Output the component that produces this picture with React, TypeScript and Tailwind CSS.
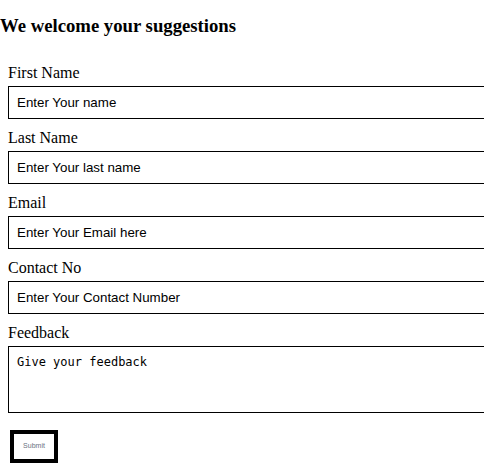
export default function App() {
  const fields = [
    { label: "First Name", placeholder: "Enter Your name" },
    { label: "Last Name", placeholder: "Enter Your last name" },
    { label: "Email", placeholder: "Enter Your Email here" },
    { label: "Contact No", placeholder: "Enter Your Contact Number" },
  ];

  return (
    <div className="bg-white text-black overflow-hidden w-[484px] h-[470px]" style={{ fontFamily: '"Liberation Serif", serif' }}>
      <h3 className="pt-[15px] text-[18.72px] font-bold leading-[22px] whitespace-nowrap">We welcome your suggestions</h3>
      <form className="pl-2 pt-[17px]" onSubmit={(e) => e.preventDefault()}>
        {fields.map((f) => (
          <div key={f.label}>
            <label className="block mt-[10px] mb-[4px] text-base leading-[18px]">{f.label}</label>
            <input
              className="block w-[520px] h-[33px] border border-black px-2 text-[13.33px] placeholder:text-black outline-none"
              style={{ fontFamily: '"Liberation Sans", Arial, sans-serif' }}
              placeholder={f.placeholder}
            />
          </div>
        ))}
        <label className="block mt-[10px] mb-[4px] text-base leading-[18px]">Feedback</label>
        <textarea
          className="block w-[520px] h-[67px] border border-black px-2 py-2 text-[12px] leading-[15px] placeholder:text-black outline-none resize-none"
          style={{ fontFamily: '"DejaVu Sans Mono", monospace' }}
          placeholder="Give your feedback"
        />
        <button
          type="submit"
          className="mt-[17px] ml-[2px] w-[48px] h-[33px] border-[4px] border-black bg-white text-[7px] text-gray-500 flex items-center justify-center"
          style={{ fontFamily: '"Liberation Sans", Arial, sans-serif' }}
        >
          Submit
        </button>
      </form>
    </div>
  );
}
